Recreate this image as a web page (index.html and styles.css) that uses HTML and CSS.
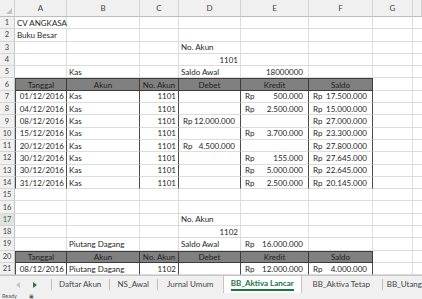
FILE: index.html
```html
<!DOCTYPE html>
<html lang="en">
  <head>
    <meta charset="UTF-8" />
    <meta name="viewport" content="width=device-width, initial-scale=1.0" />
    <title>Buku Besar</title>
    <link rel="stylesheet" href="styles.css">
  </head>

  <body>
    <div class="sheet" id="sheet"></div>

    <div class="tabs">
      <div class="nav">
        <svg class="arr off" width="4" height="6" viewBox="0 0 4 6"><path d="M4 0 L0 3 L4 6 Z" /></svg>
        <svg class="arr" width="4" height="6" viewBox="0 0 4 6"><path d="M0 0 L4 3 L0 6 Z" /></svg>
      </div>
      <div class="tab w1">Daftar Akun</div>
      <div class="tab w2">NS_Awal</div>
      <div class="tab w3">Jurnal Umum</div>
      <div class="tab active">BB_Aktiva Lancar</div>
      <div class="tab w5">BB_Aktiva Tetap</div>
      <div class="tab last">BB_Utang</div>
    </div>

    <div class="status">
      <span>Ready</span>
      <span class="macro">&#9635;</span>
    </div>

    <script>
      let sheet = document.getElementById("sheet");

      // rows 1..21, columns A..G
      let data = {
        1: ["CV ANGKASA"],
        2: ["Buku Besar"],
        3: ["", "", "", "No. Akun"],
        4: ["", "", "", { v: "1101", c: "num" }],
        5: ["", "Kas", "", "Saldo Awal", { v: "18000000", c: "num pad" }],
        6: "head",
        7: ["01/12/2016", "Kas", "1101", "", "Rp 500.000", "Rp 17.500.000"],
        8: ["04/12/2016", "Kas", "1101", "", "Rp 2.500.000", "Rp 15.000.000"],
        9: ["08/12/2016", "Kas", "1101", "Rp 12.000.000", "", "Rp 27.000.000"],
        10: ["15/12/2016", "Kas", "1101", "", "Rp 3.700.000", "Rp 23.300.000"],
        11: ["20/12/2016", "Kas", "1101", "Rp 4.500.000", "", "Rp 27.800.000"],
        12: ["30/12/2016", "Kas", "1101", "", "Rp 155.000", "Rp 27.645.000"],
        13: ["30/12/2016", "Kas", "1101", "", "Rp 5.000.000", "Rp 22.645.000"],
        14: ["31/12/2016", "Kas", "1101", "", "Rp 2.500.000", "Rp 20.145.000"],
        17: ["", "", "", "No. Akun"],
        18: ["", "", "", { v: "1102", c: "num" }],
        19: ["", "Piutang Dagang", "", "Saldo Awal", "Rp 16.000.000"],
        20: "head",
        21: ["08/12/2016", "Piutang Dagang", "1102", "", "Rp 12.000.000", "Rp 4.000.000"],
      };
      let heads = ["Tanggal", "Akun", "No. Akun", "Debet", "Kredit", "Saldo"];
      let tableRows = [7, 8, 9, 10, 11, 12, 13, 14, 21];

      function cellHtml(val, cls) {
        if (typeof val == "object") {
          return `<div class="cell ${cls} ${val.c}">${val.v}</div>`;
        }
        if (val.startsWith("Rp ")) {
          return `<div class="cell ${cls} acc"><span>Rp</span><span>${val.slice(3)}</span></div>`;
        }
        if (/^[0-9\/]+$/.test(val)) {
          return `<div class="cell ${cls} num">${val}</div>`;
        }
        return `<div class="cell ${cls}">${val}</div>`;
      }

      let html = '<div class="corner"><span class="tri"></span></div>';
      "ABCDEFG".split("").forEach((c) => {
        html += `<div class="colh">${c}</div>`;
      });
      html += '<div class="colh"></div>';

      for (let r = 1; r <= 21; r++) {
        html += `<div class="rowh${r == 17 ? " sel" : ""}">${r}</div>`;
        let row = data[r] || [];
        for (let c = 0; c < 7; c++) {
          if (row == "head") {
            if (c < 6) {
              html += `<div class="cell th${c == 0 ? " first" : ""}">${heads[c]}</div>`;
            } else {
              html += '<div class="cell"></div>';
            }
            continue;
          }
          let cls = "";
          if (tableRows.includes(r) && c < 6) {
            cls = "tb" + (c == 0 ? " first" : "");
          }
          html += cellHtml(row[c] || "", cls);
        }
        html += '<div class="cell end"></div>';
      }
      sheet.innerHTML = html;
    </script>
  </body>
</html>
```

FILE: styles.css
```css
body {
  margin: 0;
  width: 422px;
  height: 299px;
  overflow: hidden;
  background-color: white;
  font-family: Lato, "Liberation Sans", sans-serif;
  font-size: 8px;
  color: #262626;
}

.sheet {
  display: grid;
  grid-template-columns: 15px 52px 73px 39px 62px 68px 64px 40px 9px;
  grid-template-rows: 17px repeat(21, 12.3px);
}

.corner {
  background-color: #f0f0f0;
  border-right: 1px solid #cfcfcf;
  border-bottom: 1px solid #bdbdbd;
  box-sizing: border-box;
  display: flex;
  justify-content: flex-end;
  align-items: flex-end;
  padding: 0 2px 2px 0;
}

.tri {
  width: 0;
  height: 0;
  border-left: 6px solid transparent;
  border-bottom: 6px solid #c3c3c3;
}

.colh {
  background-color: #f0f0f0;
  border-right: 1px solid #d2d2d2;
  border-bottom: 1px solid #bdbdbd;
  box-sizing: border-box;
  display: flex;
  justify-content: center;
  align-items: center;
  color: #444;
}

.rowh {
  background-color: #f0f0f0;
  border-right: 1px solid #c6c6c6;
  border-bottom: 1px solid #d6d6d6;
  box-sizing: border-box;
  display: flex;
  justify-content: center;
  align-items: center;
  color: #444;
  font-size: 7.5px;
}

.rowh.sel {
  background-color: #e2e2e2;
  color: #217346;
}

.cell {
  border-right: 1px solid #dcdcdc;
  border-bottom: 1px solid #dcdcdc;
  box-sizing: border-box;
  display: flex;
  align-items: center;
  padding: 0 2px;
  white-space: nowrap;
  min-width: 0;
}

.num {
  justify-content: flex-end;
}

.pad {
  padding-right: 5px;
}

.acc {
  justify-content: space-between;
  padding: 0 5px 0 4px;
}

.tb {
  border-right: 1px solid #4a4a4a;
}

.first {
  border-left: 1px solid #4a4a4a;
}

.th {
  background-color: #808080;
  border-top: 1px solid #3c3c3c;
  border-right: 1px solid #3c3c3c;
  border-bottom: 1px solid #3c3c3c;
  justify-content: center;
  color: #1e1e1e;
}

.end {
  border-right: none;
}

.tabs {
  height: 18px;
  background-color: #f0f0f0;
  border-top: 1px solid #c6c6c6;
  box-sizing: border-box;
  display: flex;
  align-items: center;
  color: #444;
  white-space: nowrap;
  overflow: hidden;
}

.nav {
  width: 62px;
  height: 11px;
  border-right: 1px solid #bdbdbd;
  box-sizing: border-box;
  display: flex;
  align-items: center;
  gap: 13px;
  padding-left: 16px;
}

.arr {
  fill: #3a6b4a;
}

.arr.off {
  fill: #c4c4c4;
}

.tab {
  height: 11px;
  line-height: 11px;
  border-right: 1px solid #bdbdbd;
  box-sizing: border-box;
  text-align: center;
  flex-shrink: 0;
}

.w1 {
  width: 58px;
}

.w2 {
  width: 48px;
}

.w3 {
  width: 66px;
}

.w5 {
  width: 82px;
}

.last {
  border-right: none;
  padding-left: 4px;
}

.active {
  width: 77px;
  height: 17px;
  line-height: 15px;
  align-self: flex-start;
  background-color: white;
  color: #217346;
  font-weight: bold;
  border-right: none;
  box-shadow: 1px 0 0 #c6c6c6, -1px 0 0 #c6c6c6;
}

.active::after {
  content: "";
  display: block;
  width: 63px;
  height: 2px;
  margin: -2px auto 0;
  background-color: #217346;
}

.status {
  height: 6px;
  background-color: #f0f0f0;
  display: flex;
  align-items: center;
  gap: 12px;
  padding-left: 2px;
  color: #555;
  font-size: 5.5px;
  line-height: 6px;
  overflow: hidden;
}

.macro {
  font-size: 5px;
}
```
